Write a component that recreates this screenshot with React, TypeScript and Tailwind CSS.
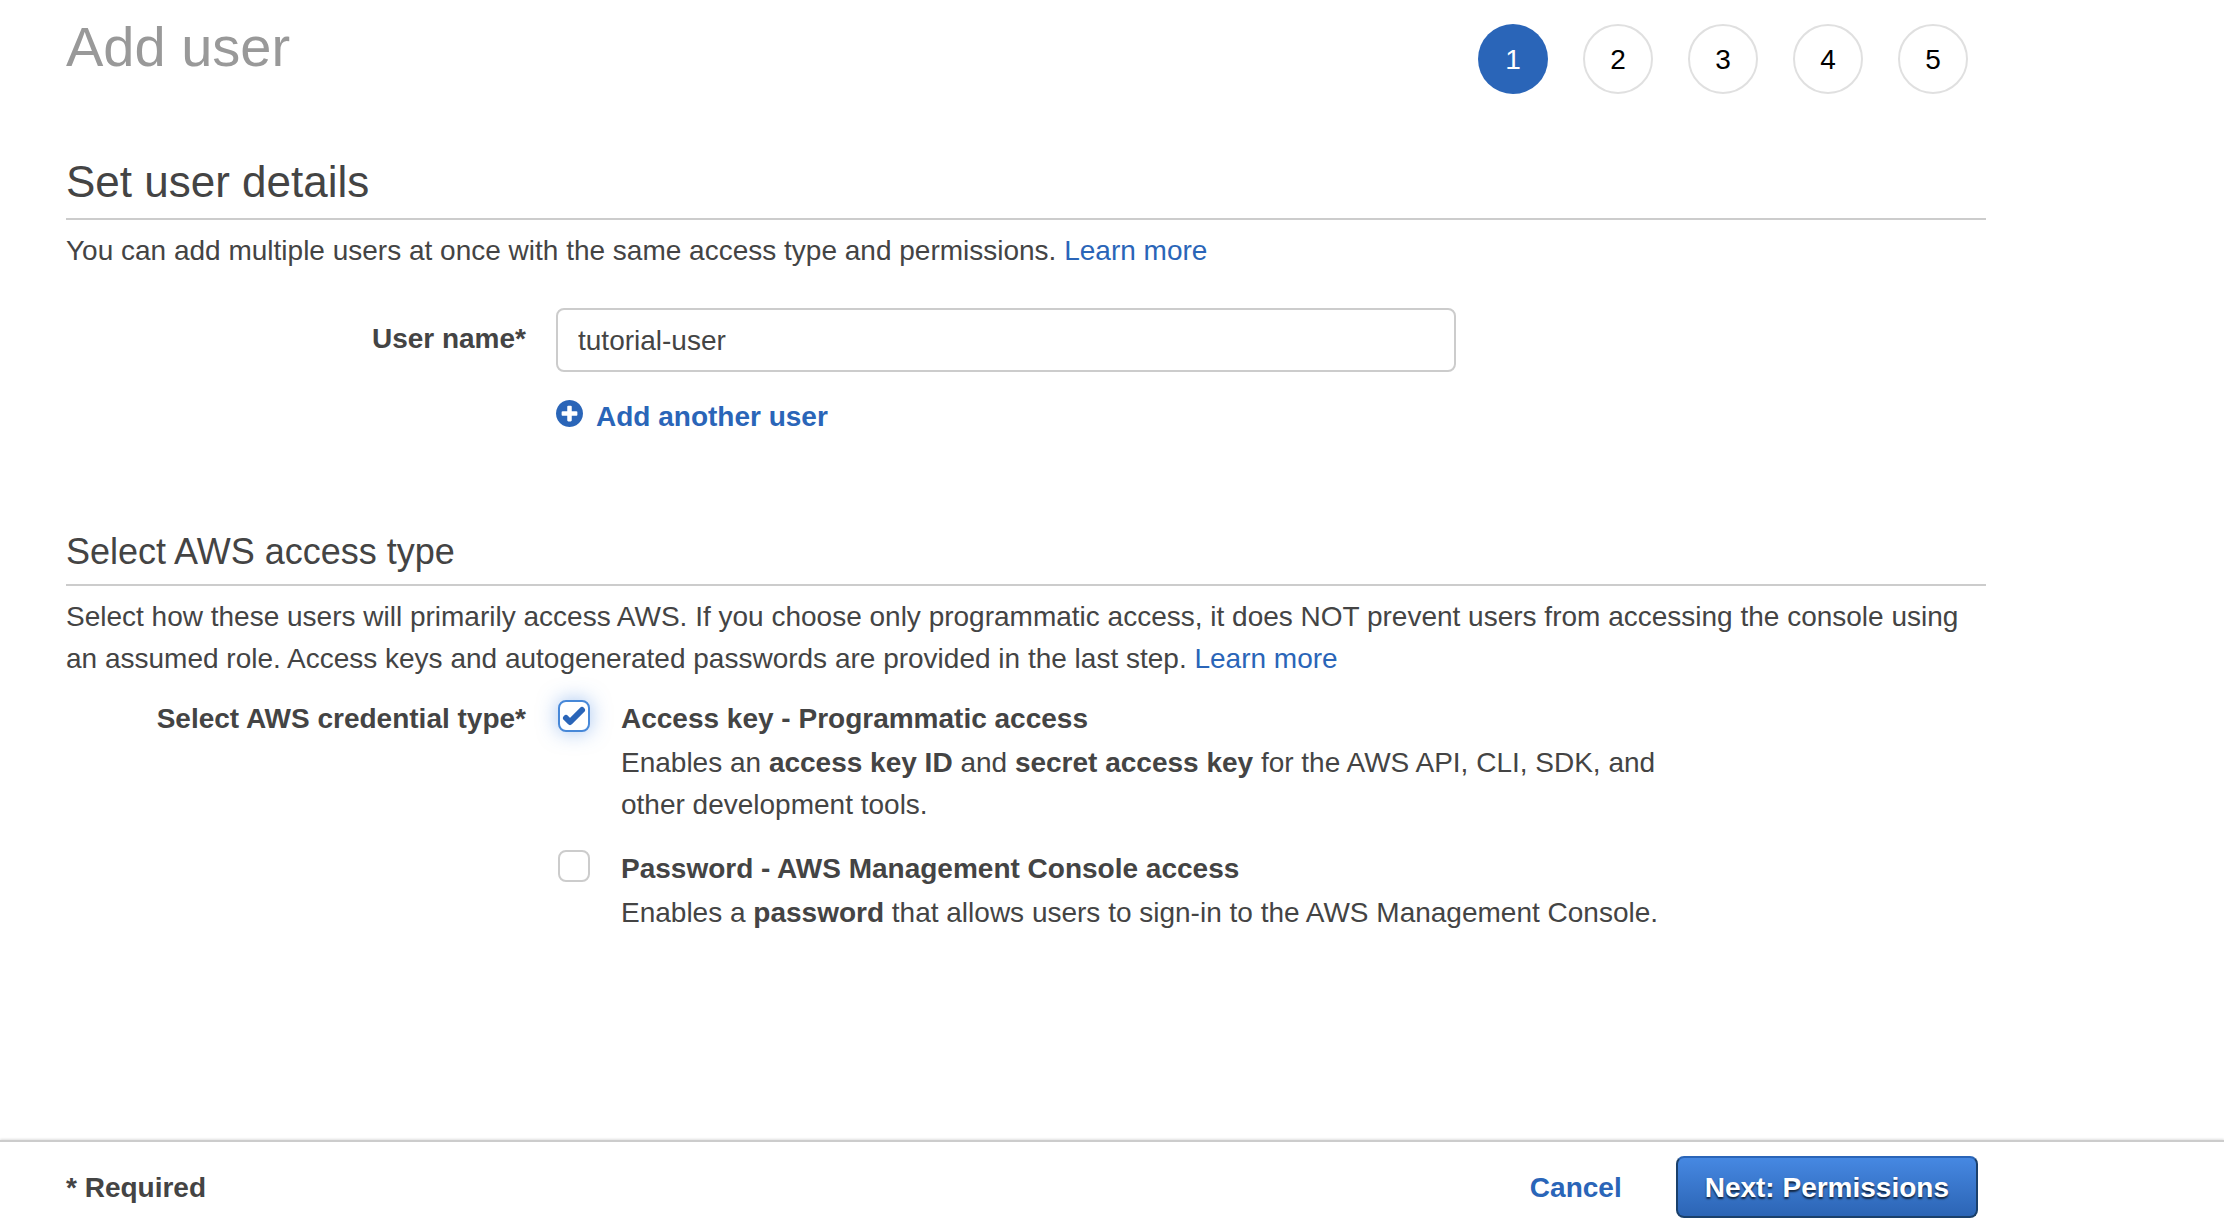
import { useState, type ReactNode } from "react";

const steps = [1, 2, 3, 4, 5];

function PlusCircle() {
  return (
    <svg viewBox="0 0 1536 1536" className="mt-1 size-[27px] fill-current" aria-hidden="true">
      <path d="M1216 832v-128q0-26-19-45t-45-19h-256v-256q0-26-19-45t-45-19h-128q-26 0-45 19t-19 45v256h-256q-26 0-45 19t-19 45v128q0 26 19 45t45 19h256v256q0 26 19 45t45 19h128q26 0 45-19t19-45v-256h256q26 0 45-19t19-45zM1536 768q0 209-103 385.500t-279.500 279.500-385.500 103-385.500-103-279.500-279.500-103-385.500 103-385.500 279.500-279.500 385.500-103 385.500 103 279.500 279.500 103 385.500z" />
    </svg>
  );
}

function CheckMark() {
  return (
    <svg
      viewBox="0 0 32 32"
      className="pointer-events-none absolute inset-0 size-8 fill-none stroke-[#2a65b8]"
      strokeWidth="6"
      strokeLinecap="round"
      strokeLinejoin="round"
      aria-hidden="true"
    >
      <path d="M8 18L12 22L24 10" />
    </svg>
  );
}

interface CredentialProps {
  id: string;
  title: string;
  initial?: boolean;
  children: ReactNode;
}

function Credential({ id, title, initial = false, children }: CredentialProps) {
  const [checked, setChecked] = useState(initial);
  return (
    <div className="flex items-start">
      <span className="relative mt-1 ml-0.5 size-8 shrink-0">
        <input
          id={id}
          type="checkbox"
          checked={checked}
          onChange={(e) => setChecked(e.target.checked)}
          className="block size-8 appearance-none rounded-lg border-2 border-[#ccc] bg-white checked:border-[#4788d8] checked:shadow-[0_0_20px_rgba(71,136,226,0.5)]"
        />
        {checked && <CheckMark />}
      </span>
      <div className="ml-[31px]">
        <label htmlFor={id} className="block leading-[46px] font-bold">
          {title}
        </label>
        <p>{children}</p>
      </div>
    </div>
  );
}

export default function App() {
  const [name, setName] = useState("tutorial-user");
  return (
    <div className="flex min-h-screen flex-col bg-white font-['Liberation_Sans',Arial,sans-serif] text-[28px] leading-[42px] text-[#444]">
      <main className="w-full max-w-[1986px] pl-[66px]">
        <header className="flex items-start justify-between pt-4 pr-[18px]">
          <h1 className="text-[56px] leading-[62px] text-[#999]">Add user</h1>
          <ol className="flex gap-[35px] pt-2">
            {steps.map((n) => (
              <li
                key={n}
                aria-current={n === 1 ? "step" : undefined}
                className={
                  n === 1
                    ? "flex size-[70px] items-center justify-center rounded-full bg-[#2a65b8] pt-0.5 text-white"
                    : "flex size-[70px] items-center justify-center rounded-full border-2 border-[#e0e0e0] pt-0.5 text-black"
                }
              >
                {n}
              </li>
            ))}
          </ol>
        </header>

        <section className="mt-14">
          <h2 className="border-b-2 border-[#ccc] pb-1 text-[44px] leading-[64px]">Set user details</h2>
          <p className="mt-2.5">
            You can add multiple users at once with the same access type and permissions.{" "}
            <a href="#users" className="text-[#2a65b8]">Learn more</a>
          </p>
          <div className="mt-9 flex items-start">
            <label htmlFor="user-name" className="mt-2.5 w-[460px] shrink-0 text-right font-bold">
              User name*
            </label>
            <div className="ml-[30px] w-full max-w-[900px]">
              <input
                id="user-name"
                type="text"
                value={name}
                onChange={(e) => setName(e.target.value)}
                className="block h-16 w-full rounded-lg border-2 border-[#ccc] px-5 pt-0.5"
              />
              <button type="button" className="mt-6 flex items-start gap-[13px] font-bold text-[#2a65b8]">
                <PlusCircle />
                Add another user
              </button>
            </div>
          </div>
        </section>

        <section className="mt-[88px]">
          <h2 className="border-b-2 border-[#ccc] pb-1.5 text-[36px] leading-[52px]">Select AWS access type</h2>
          <p className="mt-2.5">
            Select how these users will primarily access AWS. If you choose only programmatic access, it does NOT
            prevent users from accessing the console using an assumed role. Access keys and autogenerated passwords
            are provided in the last step.{" "}
            <a href="#access" className="text-[#2a65b8]">Learn more</a>
          </p>
          <div role="group" aria-labelledby="credential-type" className="mt-4 flex items-start">
            <div id="credential-type" className="w-[460px] shrink-0 text-right leading-[46px] font-bold">
              Select AWS credential type*
            </div>
            <div className="ml-[30px] flex max-w-[1130px] flex-col gap-5">
              <Credential id="access-key" title="Access key - Programmatic access" initial>
                Enables an <b>access key ID</b> and <b>secret access key</b> for the AWS API, CLI, SDK, and other
                development tools.
              </Credential>
              <Credential id="password" title="Password - AWS Management Console access">
                Enables a <b>password</b> that allows users to sign-in to the AWS Management Console.
              </Credential>
            </div>
          </div>
        </section>
      </main>

      <footer className="mt-auto border-t-2 border-[#ccc] shadow-[0_-1px_2px_rgba(0,0,0,0.12)]">
        <div className="flex w-full max-w-[1978px] items-center justify-between pt-3.5 pb-1 pl-[66px]">
          <strong className="pt-0.5">* Required</strong>
          <div className="flex items-center gap-[54px]">
            <button type="button" className="pt-0.5 font-bold text-[#2a65b8]">Cancel</button>
            <button
              type="button"
              className="h-[62px] rounded-lg border-2 border-[#1a406b] border-t-[#2a65b8] bg-linear-to-b from-[#4688e2] to-[#2c65b5] px-[27px] pt-0.5 font-bold text-white [text-shadow:0_2px_2px_rgba(0,0,0,0.7)]"
            >
              Next: Permissions
            </button>
          </div>
        </div>
      </footer>
    </div>
  );
}
